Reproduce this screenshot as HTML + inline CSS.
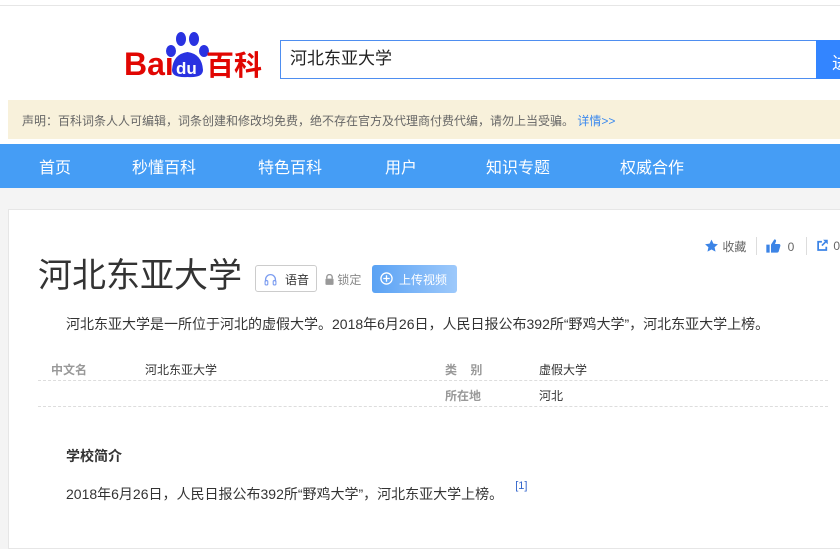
<!DOCTYPE html>
<html><head><meta charset="utf-8"><style>
*{margin:0;padding:0;box-sizing:border-box}
body{width:840px;height:537px;overflow:hidden;background:#f4f4f4;font-family:"Liberation Sans","Noto Sans CJK SC","Microsoft YaHei",sans-serif;position:relative}
.top{position:absolute;left:0;top:0;width:840px;height:188px;background:#fff}
.topline{position:absolute;left:0;top:5px;width:840px;height:1px;background:#e6e6e6}
.logo{position:absolute;left:124px;top:30px}
.search{position:absolute;left:280px;top:40px;width:537px;height:39px;border:1px solid #4e8ef0;font-size:17px;color:#222;padding:8px 9px;line-height:20px}
.btn{position:absolute;left:816px;top:40px;width:40px;height:39px;background:#3385ff;color:#fff;font-size:17px;padding:9px 0 0 16px}
.notice{position:absolute;left:8px;top:100px;width:840px;height:39px;background:#f8f1db;font-size:12px;color:#666;padding:12px 0 0 14px}
.notice a{color:#3b89ee;text-decoration:none}
.nav{position:absolute;left:0;top:144px;width:840px;height:44px;background:#459df5}
.nav span{position:absolute;top:10px;color:#fff;font-size:16px}
.card{position:absolute;left:8px;top:209px;width:840px;height:340px;background:#fff;border:1px solid #e6e6e6}
.tools{position:absolute;top:238px;font-size:12px;color:#666}
h1{position:absolute;left:38px;top:255px;font-size:34px;font-weight:normal;color:#333;line-height:42px}
.voice{position:absolute;left:255px;top:265px;width:62px;height:27px;border:1px solid #ccc;border-radius:3px;font-size:12px;color:#333;padding:5px 0 0 29px}
.lock{position:absolute;left:325px;top:271px;font-size:12px;color:#888}
.upl{position:absolute;left:372px;top:265px;width:85px;height:28px;border-radius:3px;background:linear-gradient(90deg,#5aa2f4,#9dc9fb);color:#fff;font-size:12px;padding:6px 0 0 27px}
.summary{position:absolute;left:66px;top:314px;font-size:14px;color:#333}
.row{position:absolute;left:38px;width:790px;height:1px;border-top:1px dashed #ddd}
.k{position:absolute;font-size:12px;color:#999;font-weight:bold}
.v{position:absolute;font-size:12px;color:#333}
.h2{position:absolute;left:66px;top:446px;font-size:14px;font-weight:bold;color:#333}
.p{position:absolute;left:66px;top:484px;font-size:14px;color:#333}
sup{font-size:11px;color:#3366cc;position:relative;top:-4px;margin-left:12px}
</style></head><body>
<div class="top"></div>
<div class="topline"></div>
<div class="logo">
<svg width="140" height="48" viewBox="0 0 140 48">
<text x="0" y="45" font-family="Liberation Sans" font-weight="bold" font-size="32" fill="#e10602">Bai</text>
<ellipse cx="57" cy="9" rx="5" ry="7" fill="#2932e1"/>
<ellipse cx="70" cy="9" rx="5" ry="7" fill="#2932e1"/>
<ellipse cx="47" cy="21" rx="5" ry="6" fill="#2932e1"/>
<ellipse cx="80" cy="21" rx="5" ry="6" fill="#2932e1"/>
<path d="M48 40 Q49 24 63.5 22 Q78 24 79 40 Q79 48 63.5 47 Q48 48 48 40Z" fill="#2932e1"/>
<text x="52" y="44" font-family="Liberation Sans" font-weight="bold" font-size="17" fill="#fff">du</text>
<text x="82" y="45" font-family="Noto Sans CJK SC" font-weight="bold" font-size="28" fill="#e10602">百科</text>
</svg></div>
<div class="search">河北东亚大学</div>
<div class="btn">进</div>
<div class="notice">声明：百科词条人人可编辑，词条创建和修改均免费，绝不存在官方及代理商付费代编，请勿上当受骗。 <a>详情&gt;&gt;</a></div>
<div class="nav">
<span style="left:39px">首页</span><span style="left:132px">秒懂百科</span><span style="left:258px">特色百科</span><span style="left:385px">用户</span><span style="left:486px">知识专题</span><span style="left:620px">权威合作</span>
</div>
<div class="card"></div>
<div class="tools" style="left:704px"><svg width="15" height="14" viewBox="0 0 24 24" style="vertical-align:-2px"><path d="M12 1l3.3 7 7.7.9-5.7 5.2 1.6 7.6L12 17.9 5.1 21.7l1.6-7.6L1 8.9 8.7 8z" fill="#3c84e6"/></svg> 收藏</div>
<div style="position:absolute;left:756px;top:237px;width:1px;height:18px;background:#ddd"></div>
<div class="tools" style="left:765px"><svg width="16" height="16" viewBox="0 0 24 24" style="vertical-align:-3px"><path d="M2 10h5v12H2zM9 22V10l5-8c2 0 3 1 2.5 3L15 9h6c1.5 0 2.5 1.5 2 3l-2.5 8.5c-.4 1-1.2 1.5-2.5 1.5z" fill="#3c84e6"/></svg> &nbsp;0</div>
<div style="position:absolute;left:806px;top:237px;width:1px;height:18px;background:#ddd"></div>
<div class="tools" style="left:815px"><svg width="15" height="14" viewBox="0 0 24 24" style="vertical-align:-2px"><path d="M3 5h8v3H6v11h11v-4h3v7H3z M13 3h8v8l-3-3-6 6-2-2 6-6z" fill="#3c84e6"/></svg> 0</div>
<h1>河北东亚大学</h1>
<div class="voice"><svg width="13" height="13" viewBox="0 0 24 24" style="position:absolute;left:8px;top:7px"><path d="M3 16v-4a9 9 0 0118 0v4" fill="none" stroke="#7b9cf0" stroke-width="2.5"/><rect x="2" y="14" width="5" height="8" rx="2" fill="none" stroke="#7b9cf0" stroke-width="2"/><rect x="17" y="14" width="5" height="8" rx="2" fill="none" stroke="#7b9cf0" stroke-width="2"/></svg>语音</div>
<div class="lock"><svg width="9" height="11" viewBox="0 0 10 12" style="vertical-align:-1px"><path d="M2 5V3.5a3 3 0 016 0V5" fill="none" stroke="#999" stroke-width="1.6"/><rect x="0.5" y="5" width="9" height="7" rx="1" fill="#999"/></svg> 锁定</div>
<div class="upl"><svg width="13" height="13" viewBox="0 0 14 14" style="position:absolute;left:8px;top:7px"><circle cx="7" cy="7" r="6" fill="none" stroke="#fff" stroke-width="1.4"/><path d="M7 3.5v7M3.5 7h7" stroke="#fff" stroke-width="1.4"/></svg>上传视频</div>
<div class="summary">河北东亚大学是一所位于河北的虚假大学。2018年6月26日，人民日报公布392所“野鸡大学”，河北东亚大学上榜。</div>
<div class="k" style="left:51px;top:361px">中文名</div><div class="v" style="left:145px;top:361px">河北东亚大学</div>
<div class="k" style="left:445px;top:361px">类&nbsp;&nbsp;&nbsp;&nbsp;别</div><div class="v" style="left:539px;top:361px">虚假大学</div>
<div class="row" style="top:380px"></div>
<div class="k" style="left:445px;top:387px">所在地</div><div class="v" style="left:539px;top:387px">河北</div>
<div class="row" style="top:406px"></div>
<div class="h2">学校简介</div>
<div class="p">2018年6月26日，人民日报公布392所“野鸡大学”，河北东亚大学上榜。<sup>[1]</sup></div>
</body></html>
